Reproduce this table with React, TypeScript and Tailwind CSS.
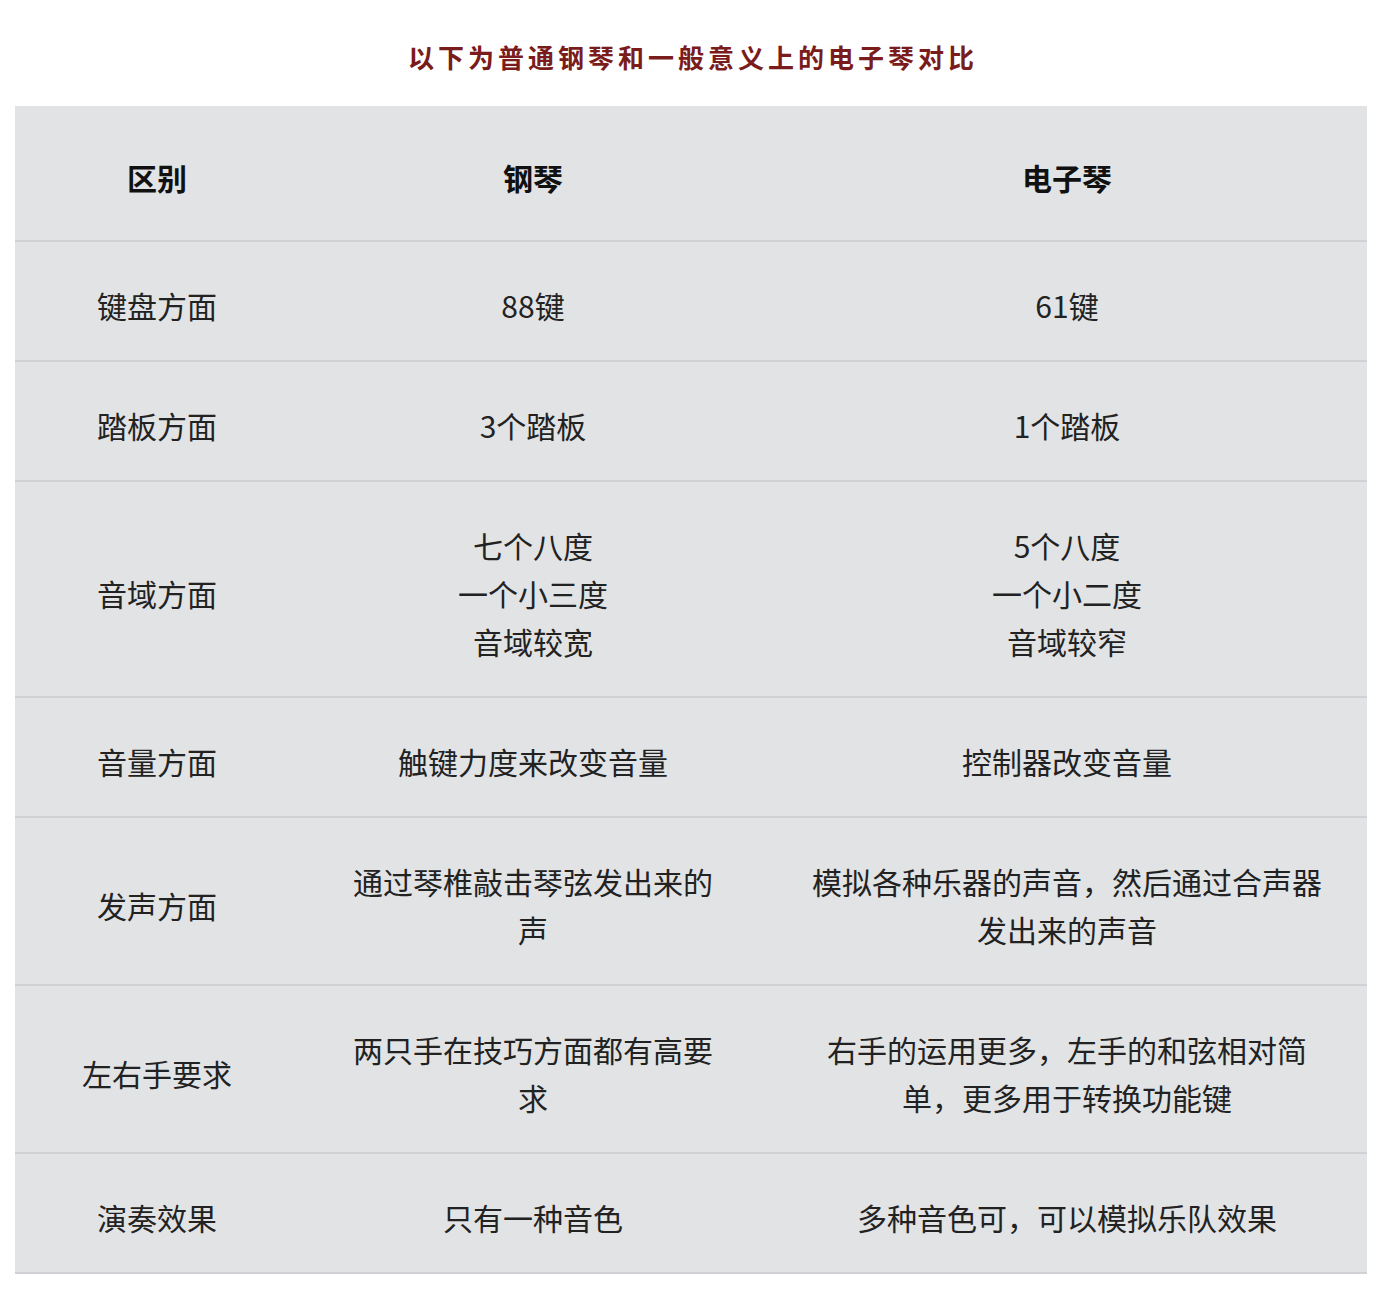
const rows: [string, string[], string[]][] = [
  ["键盘方面", ["88键"], ["61键"]],
  ["踏板方面", ["3个踏板"], ["1个踏板"]],
  ["音域方面", ["七个八度", "一个小三度", "音域较宽"], ["5个八度", "一个小二度", "音域较窄"]],
  ["音量方面", ["触键力度来改变音量"], ["控制器改变音量"]],
  ["发声方面", ["通过琴椎敲击琴弦发出来的声"], ["模拟各种乐器的声音，然后通过合声器发出来的声音"]],
  ["左右手要求", ["两只手在技巧方面都有高要求"], ["右手的运用更多，左手的和弦相对简单，更多用于转换功能键"]],
  ["演奏效果", ["只有一种音色"], ["多种音色可，可以模拟乐队效果"]],
]

function Lines({ items }: { items: string[] }) {
  return (
    <>
      {items.map((t, i) => (
        <div key={i}>{t}</div>
      ))}
    </>
  )
}

export default function App() {
  return (
    <div
      className="w-[1386px] min-h-[1312px] bg-white text-[#222]"
      style={{ fontFamily: '"Noto Sans CJK SC", "Noto Sans", sans-serif' }}
    >
      <div className="h-[106px] flex items-center justify-center pt-[6px]">
        <h1 className="text-[26px] font-bold tracking-[4px] text-[#7a1c1c]">以下为普通钢琴和一般意义上的电子琴对比</h1>
      </div>
      <table className="ml-[15px] w-[1352px] table-fixed border-collapse bg-[#e1e3e5] text-[30px] leading-[48px] text-center">
        <colgroup>
          <col className="w-[284px]" />
          <col className="w-[468px]" />
          <col className="w-[600px]" />
        </colgroup>
        <thead>
          <tr className="border-b-2 border-[#cfd1d4]">
            <th className="pt-[47px] pb-[39px] font-bold text-[#111]">区别</th>
            <th className="pt-[47px] pb-[39px] font-bold text-[#111]">钢琴</th>
            <th className="pt-[47px] pb-[39px] font-bold text-[#111]">电子琴</th>
          </tr>
        </thead>
        <tbody>
          {rows.map(([label, piano, keyboard], i) => (
            <tr key={i} className="border-b-2 border-[#cfd1d4]">
              <td className="pt-[39px] pb-[31px] px-[30px] align-middle">{label}</td>
              <td className="pt-[39px] pb-[31px] px-[40px] align-middle">
                <Lines items={piano} />
              </td>
              <td className="pt-[39px] pb-[31px] px-[40px] align-middle">
                <Lines items={keyboard} />
              </td>
            </tr>
          ))}
        </tbody>
      </table>
    </div>
  )
}
